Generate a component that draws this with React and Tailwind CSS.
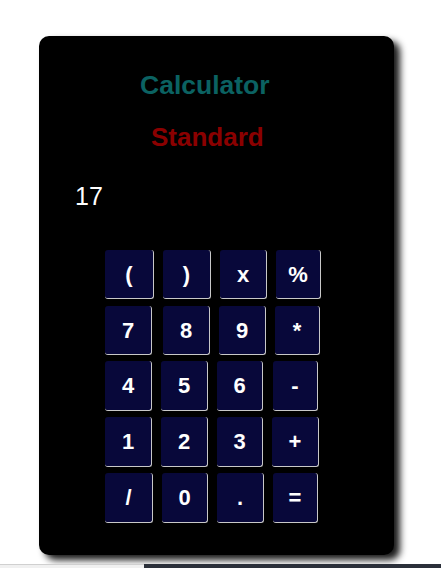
import React from "react";

const rows = [
  {
    cls: "mt-[40px]",
    btns: [
      { t: "(", c: "ml-[66px] w-[49px] h-[49px]" },
      { t: ")", c: "ml-[9px] w-[48px] h-[49px]" },
      { t: "x", c: "ml-[9px] w-[47px] h-[49px]" },
      { t: "%", c: "ml-[9px] w-[45px] h-[49px]" },
    ],
  },
  {
    cls: "mt-[7px]",
    btns: [
      { t: "7", c: "ml-[66px] w-[47px] h-[49px]" },
      { t: "8", c: "ml-[11px] w-[47px] h-[49px]" },
      { t: "9", c: "ml-[9px] w-[47px] h-[49px]" },
      { t: "*", c: "ml-[9px] w-[45px] h-[49px]" },
    ],
  },
  {
    cls: "mt-[6px]",
    btns: [
      { t: "4", c: "ml-[66px] w-[47px] h-[50px]" },
      { t: "5", c: "ml-[9px] w-[47px] h-[50px]" },
      { t: "6", c: "ml-[9px] w-[46px] h-[50px]" },
      { t: "-", c: "ml-[10px] w-[45px] h-[50px]" },
    ],
  },
  {
    cls: "mt-[6px]",
    btns: [
      { t: "1", c: "ml-[66px] w-[47px] h-[50px]" },
      { t: "2", c: "ml-[9px] w-[47px] h-[50px]" },
      { t: "3", c: "ml-[9px] w-[46px] h-[50px]" },
      { t: "+", c: "ml-[9px] w-[47px] h-[50px]" },
    ],
  },
  {
    cls: "mt-[6px]",
    btns: [
      { t: "/", c: "ml-[66px] w-[48px] h-[50px]" },
      { t: "0", c: "ml-[9px] w-[46px] h-[50px]" },
      { t: ".", c: "ml-[9px] w-[47px] h-[50px]" },
      { t: "=", c: "ml-[9px] w-[45px] h-[50px]" },
    ],
  },
];

export default function App() {
  return (
    <div className="w-[441px] h-[568px] bg-white flex flex-col overflow-hidden font-['Liberation_Sans',Arial,sans-serif]">
      <div className="pl-[39px] pt-[36px]">
        <div className="w-[355px] h-[519px] bg-black rounded-[10px] shadow-[6px_5px_7px_rgba(0,0,0,0.9)] flex flex-col">
          <div className="mt-[34px] ml-[101px] text-[26.5px] leading-[30px] font-bold text-[#0b6262]">
            Calculator
          </div>
          <div className="mt-[22px] ml-[112px] text-[26px] leading-[30px] font-bold text-[#8b0000]">
            Standard
          </div>
          <div className="mt-[30px] ml-[36px] text-[25px] leading-[28px] text-white">
            17
          </div>
          {rows.map((r, i) => (
            <div key={i} className={"flex " + r.cls}>
              {r.btns.map((b, j) => (
                <button
                  key={j}
                  className={
                    "flex items-center justify-center bg-[#08083a] text-white font-bold text-[22px] rounded-[3px] border-r border-b border-[#c8c8c8] " +
                    b.c
                  }
                >
                  {b.t}
                </button>
              ))}
            </div>
          ))}
        </div>
      </div>
      <div className="mt-auto flex h-[4px]">
        <div className="w-[144px] bg-[#f0f0f0] border-t border-[#d0d0d0]"></div>
        <div className="flex-1 bg-[#2b303a]"></div>
      </div>
    </div>
  );
}
